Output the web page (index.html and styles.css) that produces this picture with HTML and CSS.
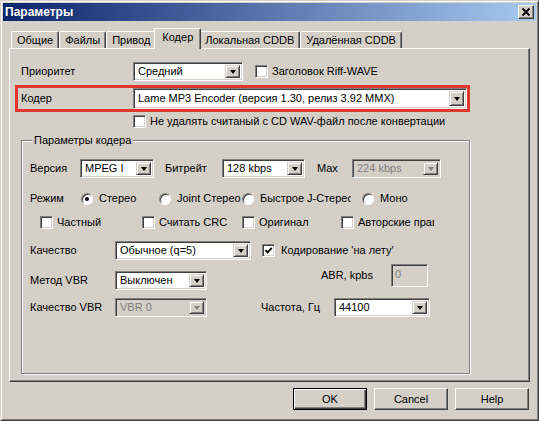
FILE: index.html
```html
<!DOCTYPE html>
<html lang="ru">
<head>
<meta charset="utf-8">
<title>Параметры</title>
<link rel="stylesheet" href="styles.css">
</head>
<body>
<div class="window">
  <div class="titlebar">
    <span class="title">Параметры</span>
    <span class="close"><svg width="14" height="12" viewBox="0 0 14 12"><path d="M3.5 2.5 L10.5 9.5 M10.5 2.5 L3.5 9.5" stroke="#000" stroke-width="1.8" fill="none"/></svg></span>
  </div>
  <div class="client">
    <div class="tabs">
      <div class="tab">Общие</div>
      <div class="tab">Файлы</div>
      <div class="tab">Привод</div>
      <div class="tab active">Кодер</div>
      <div class="tab">Локальная CDDB</div>
      <div class="tab">Удалённая CDDB</div>
    </div>
    <div class="panel">
      <div class="row r-priority">
        <span class="lbl w-main">Приоритет</span>
        <div class="combo w110"><span class="val">Средний</span><span class="dd"></span></div>
        <span class="check ml12"><span class="box"></span><span class="ctext">Заголовок Riff-WAVE</span></span>
      </div>
      <div class="row highlight">
        <span class="lbl w-main">Кодер</span>
        <div class="combo big w334"><span class="val">Lame MP3 Encoder (версия 1.30, релиз 3.92 MMX)</span><span class="dd"></span></div>
      </div>
      <div class="row r-keep">
        <span class="check"><span class="box"></span><span class="ctext">Не удалять считаный с CD WAV-файл после конвертации</span></span>
      </div>
      <fieldset class="group">
        <legend>Параметры кодера</legend>
        <div class="g-row">
          <span class="lbl w50">Версия</span>
          <div class="combo w74"><span class="val">MPEG I</span><span class="dd"></span></div>
          <span class="lbl w57 ml11">Битрейт</span>
          <div class="combo w83"><span class="val">128 kbps</span><span class="dd"></span></div>
          <span class="lbl w35 ml12">Max</span>
          <div class="combo w89 disabled"><span class="val">224 kbps</span><span class="dd"></span></div>
        </div>
        <div class="g-row mode">
          <span class="lbl w51">Режим</span>
          <span class="radio-item w78"><span class="radio checked"></span><span class="rtext">Стерео</span></span>
          <span class="radio-item w83"><span class="radio"></span><span class="rtext">Joint Стерео</span></span>
          <span class="radio-item w120"><span class="radio"></span><span class="rtext clip91">Быстрое J-Стерео</span></span>
          <span class="radio-item"><span class="radio"></span><span class="rtext">Моно</span></span>
        </div>
        <div class="g-row flags">
          <span class="check w102"><span class="box"></span><span class="ctext">Частный</span></span>
          <span class="check w100"><span class="box"></span><span class="ctext">Считать CRC</span></span>
          <span class="check w99"><span class="box"></span><span class="ctext">Оригинал</span></span>
          <span class="check"><span class="box"></span><span class="ctext clip76">Авторские права</span></span>
        </div>
        <div class="g-row quality">
          <span class="lbl w85">Качество</span>
          <div class="combo w136"><span class="val">Обычное (q=5)</span><span class="dd"></span></div>
          <span class="check ml11"><span class="box"><svg width="9" height="9" viewBox="0 0 9 9"><path d="M1.5 4 L3.5 6.3 L7.8 1.8" stroke="#000" stroke-width="1.9" fill="none"/></svg></span><span class="ctext wide">Кодирование 'на лету'</span></span>
        </div>
        <div class="g-row vbr">
          <span class="lbl w85">Метод VBR</span>
          <div class="combo w92"><span class="val">Выключен</span><span class="dd"></span></div>
          <div class="abr">
            <span class="lbl w70">ABR, kpbs</span>
            <div class="edit disabled">0</div>
          </div>
        </div>
        <div class="g-row vbrq">
          <span class="lbl w85">Качество VBR</span>
          <div class="combo w92 disabled"><span class="val">VBR 0</span><span class="dd"></span></div>
          <span class="lbl w73 ml54">Частота, Гц</span>
          <div class="combo w96"><span class="val">44100</span><span class="dd"></span></div>
        </div>
      </fieldset>
    </div>
    <div class="buttons">
      <div class="button default">OK</div>
      <div class="button">Cancel</div>
      <div class="button">Help</div>
    </div>
  </div>
</div>
</body>
</html>
```
FILE: styles.css
```css
* { box-sizing: border-box; }
html, body { margin: 0; padding: 0; }
body {
  width: 539px;
  height: 421px;
  overflow: hidden;
  background: #d4d0c8;
  font-family: "Liberation Sans", Arial, sans-serif;
  font-size: 11px;
  line-height: 13px;
  color: #000;
}
.window {
  width: 539px;
  height: 421px;
  border: 1px solid;
  border-color: #d4d0c8 #404040 #404040 #d4d0c8;
  box-shadow: inset 1px 1px #fff, inset -1px -1px #808080;
  padding: 2px;
  background: #d4d0c8;
}
.titlebar {
  height: 18px;
  background: linear-gradient(90deg, #0a246a, #a6caf0);
  display: flex;
  align-items: center;
  justify-content: space-between;
  padding: 0 2px 0 2px;
}
.title { color: #fff; font-weight: bold; font-size: 12px; }
.close {
  width: 16px;
  height: 14px;
  background: #d4d0c8;
  border: 1px solid;
  border-color: #fff #404040 #404040 #fff;
  box-shadow: inset -1px -1px #808080;
  display: flex;
  align-items: center;
  justify-content: center;
}
.client { padding: 7px 6px 0 6px; }
.tabs {
  display: flex;
  align-items: flex-end;
  height: 20px;
  padding-left: 2px;
  position: relative;
  z-index: 1;
}
.tab {
  height: 17px;
  padding: 2px 5px 0 5px;
  background: #d4d0c8;
  border-top: 1px solid #fff;
  border-left: 1px solid #fff;
  border-right: 1px solid #404040;
  box-shadow: inset -1px 0 #808080;
  border-radius: 2px 2px 0 0;
  white-space: nowrap;
}
.tab.active {
  height: 21px;
  margin: 0 -2px -1px -2px;
  padding: 2px 7px 0 7px;
  position: relative;
  z-index: 2;
}
.panel {
  height: 334px;
  border: 1px solid;
  border-color: #fff #404040 #404040 #fff;
  box-shadow: inset -1px -1px #808080;
  padding: 13px 0 0 5px;
}
.row { display: flex; align-items: center; }
.r-priority { height: 19px; padding-left: 6px; }
.highlight {
  margin-top: 4px;
  width: 455px;
  height: 27px;
  border: 3px solid #e2372d;
  padding-left: 3px;
}
.r-keep { margin-top: 2px; height: 15px; padding-left: 118px; }
.lbl { white-space: nowrap; flex: none; }
.w-main { width: 112px; }
.w50 { width: 50px; } .w51 { width: 51px; } .w57 { width: 57px; }
.w35 { width: 35px; } .w70 { width: 70px; } .w73 { width: 73px; } .w85 { width: 85px; }
.w74 { width: 74px; } .w78 { width: 78px; } .w83 { width: 83px; } .w89 { width: 89px; }
.w92 { width: 92px; } .w96 { width: 96px; } .w99 { width: 99px; } .w100 { width: 100px; }
.w102 { width: 102px; } .w110 { width: 110px; } .w120 { width: 120px; } .w136 { width: 136px; }
.w334 { width: 334px; }
.ml11 { margin-left: 11px; } .ml12 { margin-left: 12px; } .ml54 { margin-left: 54px; }

.combo {
  flex: none;
  display: flex;
  align-items: stretch;
  height: 19px;
  border: 1px solid;
  border-color: #808080 #fff #fff #808080;
  box-shadow: inset 1px 1px #404040, inset -1px -1px #d4d0c8;
  background: #fff;
  padding: 2px;
}
.combo.big { height: 21px; }
.combo .val {
  flex: 1;
  padding-left: 2px;
  white-space: nowrap;
  overflow: hidden;
  display: flex;
  align-items: center;
}
.combo .dd {
  flex: none;
  width: 15px;
  background: #d4d0c8;
  border: 1px solid;
  border-color: #d4d0c8 #404040 #404040 #d4d0c8;
  box-shadow: inset 1px 1px #fff, inset -1px -1px #808080;
  display: flex;
  align-items: center;
  justify-content: center;
}
.combo .dd::after {
  content: "";
  width: 0;
  height: 0;
  border-left: 3.5px solid transparent;
  border-right: 3.5px solid transparent;
  border-top: 4px solid #000;
}
.combo.disabled { background: #d4d0c8; }
.combo.disabled .val { color: #808080; }
.combo.disabled .dd::after { border-top-color: #808080; }

.check { display: flex; align-items: center; flex: none; white-space: nowrap; }
.box {
  flex: none;
  width: 13px;
  height: 13px;
  background: #fff;
  border: 1px solid;
  border-color: #808080 #fff #fff #808080;
  box-shadow: inset 1px 1px #404040, inset -1px -1px #d4d0c8;
  display: flex;
  align-items: center;
  justify-content: center;
}
.ctext { margin-left: 4px; }
.ctext.wide { margin-left: 6px; }
.clip76 { width: 76px; overflow: hidden; }
.clip91 { width: 91px; overflow: hidden; white-space: nowrap; }

.group {
  margin: 5px 0 0 6px;
  width: 449px;
  height: 240px;
  border: 1px solid #808080;
  box-shadow: inset 1px 1px #fff, 1px 1px #fff;
  padding: 12px 0 0 8px;
  min-width: 0;
}
.group legend {
  padding: 0 2px;
  margin-left: 2px;
  background: #d4d0c8;
}
.g-row { display: flex; align-items: center; height: 19px; }
.mode { margin-top: 11px; }
.flags { margin-top: 5px; padding-left: 10px; }
.quality { margin-top: 9px; }
.vbr { margin-top: 11px; }
.vbrq { margin-top: 8px; }

.radio-item { display: flex; align-items: center; flex: none; white-space: nowrap; }
.radio {
  flex: none;
  width: 12px;
  height: 12px;
  border-radius: 50%;
  background: #fff;
  border: 1px solid;
  border-color: #808080 #fff #fff #808080;
  box-shadow: inset 1px 1px #404040;
  display: flex;
  align-items: center;
  justify-content: center;
}
.radio.checked::after {
  content: "";
  width: 4px;
  height: 4px;
  border-radius: 50%;
  background: #000;
}
.rtext { margin-left: 6px; }

.abr {
  display: flex;
  align-items: center;
  align-self: flex-start;
  margin-top: -7px;
  margin-left: 114px;
}
.edit {
  width: 37px;
  height: 23px;
  border: 1px solid;
  border-color: #808080 #fff #fff #808080;
  box-shadow: inset 1px 1px #404040, inset -1px -1px #d4d0c8;
  padding: 3px 0 0 3px;
}
.edit.disabled { background: #d4d0c8; color: #808080; }

.buttons {
  display: flex;
  justify-content: flex-end;
  gap: 7px;
  margin-top: 6px;
  padding-right: 1px;
}
.button {
  width: 74px;
  height: 22px;
  display: flex;
  align-items: center;
  justify-content: center;
  background: #d4d0c8;
  border: 1px solid;
  border-color: #fff #404040 #404040 #fff;
  box-shadow: inset -1px -1px #808080;
}
.button.default {
  border: 1px solid #000;
  box-shadow: inset 1px 1px #fff, inset -1px -1px #404040, inset -2px -2px #808080;
}
```
